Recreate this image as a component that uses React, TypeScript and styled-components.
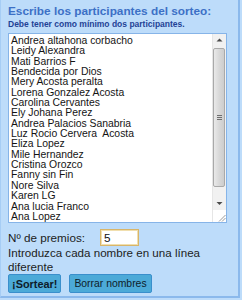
import React from "react";
import styled, { createGlobalStyle } from "styled-components";

const Global = createGlobalStyle`
  html, body { margin: 0; padding: 0; background: #bddcfa; }
  body { font-family: "Liberation Sans", Arial, sans-serif; }
`;

const Panel = styled.div`
  box-sizing: border-box;
  width: 240px;
  background: #bddcfa;
  border-left: 1px solid #a6cdf5;
  border-right: 2px solid #8bb9ec;
  border-bottom: 2px solid #8bb9ec;
  padding: 4px 0 3px 7px;
`;

const Title = styled.h1`
  margin: 0;
  font: bold 11.8px/15px "Liberation Sans", Arial, sans-serif;
  color: #3c70c6;
  white-space: nowrap;
`;

const Subtitle = styled.p`
  margin: 0;
  font: bold 8.5px/10px "Liberation Sans", Arial, sans-serif;
  color: #1f4296;
  white-space: nowrap;
`;

const NamesBox = styled.div`
  box-sizing: border-box;
  display: flex;
  width: 219px;
  height: 190px;
  margin-top: 4px;
  border: 1px solid #86b4e8;
  background: #fff;
`;

const Names = styled.textarea`
  flex: 1;
  min-width: 0;
  margin: 0;
  border: 0;
  padding: 2px 2px;
  resize: none;
  overflow: hidden;
  outline: none;
  background: transparent;
  color: #141414;
  font: 10.4px/10.35px "Liberation Sans", Arial, sans-serif;
`;

const Scrollbar = styled.div`
  width: 13px;
  display: flex;
  flex-direction: column;
  background: #f1f1f1;
  border-left: 1px solid #e6e6e6;
`;

const ArrowButton = styled.div`
  height: 13px;
  display: flex;
  align-items: center;
  justify-content: center;
`;

const Track = styled.div`
  flex: 1;
  display: flex;
  flex-direction: column;
  padding: 1px 0 0 0;
`;

const Thumb = styled.div`
  box-sizing: border-box;
  height: 139px;
  margin: 0 1px 0 0;
  border: 1px solid #a9a9a9;
  border-radius: 2px;
  background: linear-gradient(to right, #e9e9e9, #d6d6d6 60%, #cdcdcd);
  display: flex;
  align-items: center;
  justify-content: center;
`;

const Corner = styled.div`
  height: 12px;
  background: #fff;
  display: flex;
  align-items: flex-end;
  justify-content: flex-end;
`;

const Row = styled.div`
  display: flex;
  align-items: center;
  gap: 15px;
  margin-top: 6px;
  height: 17px;
`;

const Label = styled.label`
  font: 11.7px/13.5px "Liberation Sans", Arial, sans-serif;
  color: #1c1c1c;
`;

const PrizeInput = styled.input`
  box-sizing: border-box;
  width: 39px;
  height: 17px;
  margin: 0;
  padding: 0 3px;
  border: 1px solid #d8b56a;
  box-shadow: inset 0 0 0 1px #f1dfae;
  background: #fff;
  outline: none;
  color: #111;
  font: 11.7px "Liberation Sans", Arial, sans-serif;
`;

const Hint = styled.p`
  margin: 0;
  width: 225px;
  font: 11.6px/13.5px "Liberation Sans", Arial, sans-serif;
  color: #1c1c1c;
`;

const Actions = styled.div`
  display: flex;
  gap: 8px;
  margin-top: 1px;
`;

const Button = styled.button<{ $primary?: boolean }>`
  box-sizing: border-box;
  height: 19px;
  margin: 0;
  padding: 0 ${(p) => (p.$primary ? 3 : 4)}px;
  border: 1px solid #3a8fcc;
  border-radius: 2px;
  background: #4caad8;
  color: #0e1c2a;
  font: ${(p) => (p.$primary ? "bold 10.9px" : "10.4px")} "Liberation Sans", Arial, sans-serif;
  cursor: pointer;
`;

const names = [
  "Andrea altahona corbacho",
  "Leidy Alexandra",
  "Mati Barrios F",
  "Bendecida por Dios",
  "Mery Acosta peralta",
  "Lorena Gonzalez Acosta",
  "Carolina Cervantes",
  "Ely Johana Perez",
  "Andrea Palacios Sanabria",
  "Luz Rocio Cervera  Acosta",
  "Eliza Lopez",
  "Mile Hernandez",
  "Cristina Orozco",
  "Fanny sin Fin",
  "Nore Silva",
  "Karen LG",
  "Ana lucia Franco",
  "Ana Lopez",
];

export default function App() {
  return (
    <>
      <Global />
      <Panel>
        <Title>Escribe los participantes del sorteo:</Title>
        <Subtitle>Debe tener como mínimo dos participantes.</Subtitle>
        <NamesBox>
          <Names defaultValue={names.join("\n")} spellCheck={false} />
          <Scrollbar>
            <ArrowButton>
              <svg width="7" height="5" viewBox="0 0 7 5">
                <path d="M3.5 0.5 L6.5 3.5 L0.5 3.5 Z" fill="#4a4a4a" />
              </svg>
            </ArrowButton>
            <Track>
              <Thumb>
                <svg width="5" height="6" viewBox="0 0 5 6">
                  <path d="M0 0.5 H5 M0 2.5 H5 M0 4.5 H5" stroke="#6e6e6e" strokeWidth="1" />
                </svg>
              </Thumb>
            </Track>
            <ArrowButton>
              <svg width="7" height="5" viewBox="0 0 7 5">
                <path d="M0.5 1 L6.5 1 L3.5 4 Z" fill="#4a4a4a" />
              </svg>
            </ArrowButton>
            <Corner>
              <svg width="9" height="9" viewBox="0 0 9 9">
                <path d="M8.5 2 L2 8.5 M8.5 5 L5 8.5" stroke="#9a9a9a" strokeWidth="1" />
              </svg>
            </Corner>
          </Scrollbar>
        </NamesBox>
        <Row>
          <Label htmlFor="premios">Nº de premios:</Label>
          <PrizeInput id="premios" defaultValue="5" />
        </Row>
        <Hint>Introduzca cada nombre en una línea diferente</Hint>
        <Actions>
          <Button $primary>¡Sortear!</Button>
          <Button>Borrar nombres</Button>
        </Actions>
      </Panel>
    </>
  );
}
